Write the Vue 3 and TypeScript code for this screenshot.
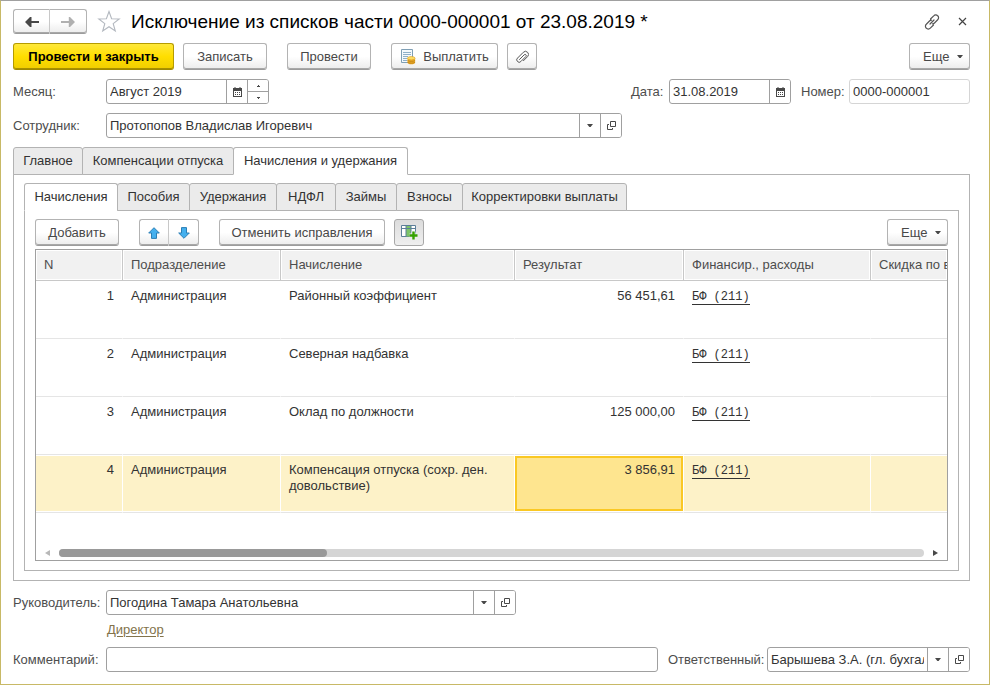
<script setup lang="ts">
import { ref } from 'vue'

interface Accrual {
  n: number
  department: string
  name: string
  result: string
  finance: string
}

const month = ref('Август 2019')
const date = ref('31.08.2019')
const docNumber = ref('0000-000001')
const employee = ref('Протопопов Владислав Игоревич')
const manager = ref('Погодина Тамара Анатольевна')
const comment = ref('')
const responsible = ref('Барышева З.А. (гл. бухгалтер)')

const sections = ['Главное', 'Компенсации отпуска', 'Начисления и удержания']
const activeSection = ref(2)

const subsections = ['Начисления', 'Пособия', 'Удержания', 'НДФЛ', 'Займы', 'Взносы', 'Корректировки выплаты']
const activeSubsection = ref(0)

const columns = ['N', 'Подразделение', 'Начисление', 'Результат', 'Финансир., расходы', 'Скидка по вычетам']

const rows: Accrual[] = [
  { n: 1, department: 'Администрация', name: 'Районный коэффициент', result: '56 451,61', finance: 'БФ (211)' },
  { n: 2, department: 'Администрация', name: 'Северная надбавка', result: '', finance: 'БФ (211)' },
  { n: 3, department: 'Администрация', name: 'Оклад по должности', result: '125 000,00', finance: 'БФ (211)' },
  { n: 4, department: 'Администрация', name: 'Компенсация отпуска (сохр. ден. довольствие)', result: '3 856,91', finance: 'БФ (211)' },
]
const selectedRow = ref(4)
const visibleShare = 31
</script>

<template>
  <main class="window">
    <header class="titlebar">
      <div class="pair">
        <button type="button" class="btn nav" aria-label="Назад">
          <svg width="14" height="10" viewBox="0 0 14 10"><path d="M0 5 5 0h1.500v3.900H14v2.200H6.500V10H5z" fill="#484848" /></svg>
        </button>
        <button type="button" class="btn nav" aria-label="Вперед">
          <svg width="14" height="10" viewBox="0 0 14 10"><path d="M14 5 9 0H7.800v4H0v2h7.800v4H9z" fill="#b0b0b0" /></svg>
        </button>
      </div>
      <button type="button" class="plain star" aria-label="В избранное">
        <svg width="24" height="23" viewBox="0 0 24 23"><path d="m12 1.500 2.600 7.200 7.600.200-6 4.700 2.100 7.400-6.300-4.300L5.700 21l2.100-7.400-6-4.700 7.600-.200z" fill="#fff" stroke="#b3b8bf" stroke-width="1.100" /></svg>
      </button>
      <h1>Исключение из списков части 0000-000001 от 23.08.2019 *</h1>
      <button type="button" class="plain link" aria-label="Получить ссылку">
        <svg width="16" height="16" viewBox="0 0 16 16" fill="none" stroke="#555" stroke-width="1.200" stroke-linecap="round">
          <path d="M6.500 5 9.700 1.800a2.700 2.700 0 0 1 4 0 2.700 2.700 0 0 1 0 4L10.500 9a2.700 2.700 0 0 1-2 .800M9.500 11l-3.200 3.200a2.700 2.700 0 0 1-4 0 2.700 2.700 0 0 1 0-4L5.500 7a2.700 2.700 0 0 1 2-.800M6 10l4-4" />
        </svg>
      </button>
      <button type="button" class="plain close" aria-label="Закрыть">
        <svg width="9" height="9" viewBox="0 0 9 9"><path d="m1 1 7 7M8 1 1 8" stroke="#444" stroke-width="1.200" /></svg>
      </button>
    </header>

    <div class="commands">
      <button type="button" class="btn primary">Провести и закрыть</button>
      <button type="button" class="btn regular">Записать</button>
      <button type="button" class="btn regular apart">Провести</button>
      <button type="button" class="btn apart pay">
        <svg width="16" height="16" viewBox="0 0 16 16">
          <path d="M1.500.500h11v13h-11z" fill="#f4f9fc" stroke="#7f9fb5" />
          <path d="M3 3.500h8M3 5.500h8M3 7.500h5M3 9.500h4M3 11.500h4" stroke="#8fb0c8" />
          <path d="M7.500 9v4.500c0 1 1.500 1.800 3.800 1.800s3.800-.800 3.800-1.800V9z" fill="#e9a92a" />
          <path d="M7.500 11.500c1.800 1.200 5.800 1.200 7.600 0M7.500 13.300c1.800 1.200 5.800 1.200 7.600 0" fill="none" stroke="#b97c10" stroke-width=".7" />
          <ellipse cx="11.300" cy="9.200" rx="3.800" ry="1.700" fill="#ffdc62" stroke="#d69a20" stroke-width=".6" />
        </svg>
        <span>Выплатить</span>
      </button>
      <button type="button" class="btn icon" aria-label="Файлы">
        <svg width="14" height="14" viewBox="0 0 14 14" fill="none" stroke="#555" stroke-linecap="round">
          <path d="M4.500 9.500 9.200 4.800a1.200 1.200 0 0 1 1.700 1.700l-5 5a2.300 2.300 0 0 1-3.400 0 2.300 2.300 0 0 1 0-3.400l5.800-5.800a3 3 0 0 1 4.300 0 3 3 0 0 1 0 4.300L8.500 10.700" />
        </svg>
      </button>
      <button type="button" class="btn more">Еще<i class="caret" /></button>
    </div>

    <div class="line">
      <label class="lead" for="month">Месяц:</label>
      <div class="field month">
        <input id="month" v-model="month" type="text" />
        <button type="button" class="part" aria-label="Календарь">
          <svg width="9" height="10" viewBox="0 0 9 10"><path d="M0 1h9v9H0z" fill="#484848" /><path d="M1 4h7v5H1z" fill="#fff" /><path d="M2 0v2M7 0v2" stroke="#484848" /><path d="M2 5.500h1m1 0h1m1 0h1M2 7.500h1m1 0h1m1 0h1" stroke="#484848" /></svg>
        </button>
        <div class="spin">
          <button type="button" aria-label="Больше"><svg width="3" height="2" viewBox="0 0 3 2"><path d="M1 0h1v1h1v1H0V1h1z" fill="#484848" /></svg></button>
          <button type="button" aria-label="Меньше"><svg width="3" height="2" viewBox="0 0 3 2"><path d="M0 0h3v1H2v1H1V1H0z" fill="#484848" /></svg></button>
        </div>
      </div>
      <label class="push date-label" for="date">Дата:</label>
      <div class="field date">
        <input id="date" v-model="date" type="text" />
        <button type="button" class="part" aria-label="Календарь">
          <svg width="9" height="10" viewBox="0 0 9 10"><path d="M0 1h9v9H0z" fill="#484848" /><path d="M1 4h7v5H1z" fill="#fff" /><path d="M2 0v2M7 0v2" stroke="#484848" /><path d="M2 5.500h1m1 0h1m1 0h1M2 7.500h1m1 0h1m1 0h1" stroke="#484848" /></svg>
        </button>
      </div>
      <label class="number-label" for="number">Номер:</label>
      <div class="field number"><input id="number" v-model="docNumber" type="text" /></div>
    </div>

    <div class="line">
      <label class="lead" for="employee">Сотрудник:</label>
      <div class="field employee">
        <input id="employee" v-model="employee" type="text" />
        <button type="button" class="part" aria-label="Выбрать"><i class="caret" /></button>
        <button type="button" class="part" aria-label="Открыть">
          <svg width="9" height="9" viewBox="0 0 9 9"><path d="M3.500.500h5v5h-5zM2 3.500H.500v5h5V7" fill="none" stroke="#484848" /></svg>
        </button>
      </div>
    </div>

    <section class="book">
      <nav class="tabs outer" role="tablist">
        <button v-for="(s, i) in sections" :key="s" type="button" role="tab" :aria-selected="i === activeSection" class="tab" :class="{ active: i === activeSection }" @click="activeSection = i">{{ s }}</button>
      </nav>
      <div class="page">
        <nav class="tabs inner" role="tablist">
          <button v-for="(s, i) in subsections" :key="s" type="button" role="tab" :aria-selected="i === activeSubsection" class="tab" :class="{ active: i === activeSubsection }" @click="activeSubsection = i">{{ s }}</button>
        </nav>
        <div class="page">
          <div class="commands">
            <button type="button" class="btn regular">Добавить</button>
            <div class="pair apart">
              <button type="button" class="btn icon" aria-label="Вверх">
                <svg width="12" height="12" viewBox="0 0 12 12"><path d="M6 .700 11.300 6H8.500v5.400h-5V6H.700z" fill="#45b0ee" stroke="#2c7fb5" /></svg>
              </button>
              <button type="button" class="btn icon" aria-label="Вниз">
                <svg width="12" height="12" viewBox="0 0 12 12"><path d="M6 11.300 .700 6h2.800V.600h5V6h2.800z" fill="#45b0ee" stroke="#2c7fb5" /></svg>
              </button>
            </div>
            <button type="button" class="btn apart wide">Отменить исправления</button>
            <button type="button" class="btn icon pressed" aria-label="Показать колонки">
              <svg width="17" height="15" viewBox="0 0 17 15">
                <path d="M.500.500h14v11H.500z" fill="#fff" stroke="#5c7f99" />
                <path d="M5 1h5v10.500H5z" fill="#7cc467" />
                <path d="M.500 3.500h14M5 .500v11M10 .500v11" stroke="#5c7f99" />
                <path d="M12.500 6.500v8M8.500 10.500h8" stroke="#eee" stroke-width="4" />
                <path d="M12.500 6.500v8M8.500 10.500h8" stroke="#35a000" stroke-width="2.400" />
              </svg>
            </button>
            <button type="button" class="btn more">Еще<i class="caret" /></button>
          </div>

          <div class="grid">
            <table>
              <colgroup>
                <col class="c-n" /><col class="c-dep" /><col class="c-name" /><col class="c-res" /><col class="c-fin" /><col />
              </colgroup>
              <thead>
                <tr><th v-for="c in columns" :key="c" scope="col">{{ c }}</th></tr>
              </thead>
              <tbody>
                <tr v-for="r in rows" :key="r.n" :class="{ selected: r.n === selectedRow }" @click="selectedRow = r.n">
                  <td class="num">{{ r.n }}</td>
                  <td>{{ r.department }}</td>
                  <td>{{ r.name }}</td>
                  <td class="num current">{{ r.result }}</td>
                  <td><a href="#" class="fin">{{ r.finance }}</a></td>
                  <td></td>
                </tr>
              </tbody>
            </table>
            <div class="scroll">
              <button type="button" class="plain" aria-label="Влево"><svg width="5" height="6" viewBox="0 0 5 6"><path d="M5 0v6L0 3z" fill="#b8b8b8" /></svg></button>
              <div class="track"><div class="thumb" :style="{ width: visibleShare + '%' }" /></div>
              <button type="button" class="plain" aria-label="Вправо"><svg width="5" height="6" viewBox="0 0 5 6"><path d="M0 0v6l5-3z" fill="#484848" /></svg></button>
            </div>
          </div>
        </div>
      </div>
    </section>

    <div class="line">
      <label class="lead" for="manager">Руководитель:</label>
      <div class="field manager">
        <input id="manager" v-model="manager" type="text" />
        <button type="button" class="part" aria-label="Выбрать"><i class="caret" /></button>
        <button type="button" class="part" aria-label="Открыть">
          <svg width="9" height="9" viewBox="0 0 9 9"><path d="M3.500.500h5v5h-5zM2 3.500H.500v5h5V7" fill="none" stroke="#484848" /></svg>
        </button>
      </div>
    </div>
    <div class="position"><a href="#">Директор</a></div>
    <div class="line">
      <label class="lead" for="comment">Комментарий:</label>
      <div class="field comment"><input id="comment" v-model="comment" type="text" /></div>
      <label class="resp-label" for="responsible">Ответственный:</label>
      <div class="field responsible">
        <input id="responsible" v-model="responsible" type="text" />
        <button type="button" class="part" aria-label="Выбрать"><i class="caret" /></button>
        <button type="button" class="part" aria-label="Открыть">
          <svg width="9" height="9" viewBox="0 0 9 9"><path d="M3.500.500h5v5h-5zM2 3.500H.500v5h5V7" fill="none" stroke="#484848" /></svg>
        </button>
      </div>
    </div>
  </main>
</template>

<style>
body {
  margin: 0;
  background: #fff;
}
</style>

<style scoped>
.window,
.window * {
  box-sizing: border-box;
}
.window {
  display: flex;
  flex-direction: column;
  gap: 9px;
  min-height: 100vh;
  padding: 8px 19px 12px 12px;
  border: 1px solid #c8b966;
  border-top-color: #a0a0a0;
  background: #fff;
  color: #333;
  font: 13px/16px Arial, "Liberation Sans", sans-serif;
}
button,
input {
  margin: 0;
  font: inherit;
  color: inherit;
}
svg {
  display: block;
  flex: none;
}
.plain {
  display: flex;
  align-items: center;
  justify-content: center;
  padding: 0;
  border: 0;
  background: none;
}
.titlebar {
  display: flex;
  align-items: center;
  height: 25px;
}
h1 {
  flex: 1;
  margin: 0;
  color: #000;
  font-size: 19px;
  font-weight: 400;
  line-height: 24px;
  white-space: nowrap;
}
.star {
  width: 24px;
  margin: 0 10px;
}
.link {
  width: 16px;
  margin-right: 15px;
}
.close {
  width: 15px;
}
.commands {
  display: flex;
  align-items: center;
  gap: 9px;
  height: 27px;
}
.btn {
  display: flex;
  flex: none;
  align-items: center;
  justify-content: center;
  height: 27px;
  padding: 0;
  border: 1px solid #b3b3b3;
  border-bottom-color: #9c9c9c;
  border-radius: 3px;
  background: linear-gradient(#fff 50%, #ececec);
  box-shadow: inset 0 -1px #a8a8a8;
  color: #484848;
  white-space: nowrap;
}
.regular {
  width: 84px;
}
.wide {
  width: 166px;
}
.apart {
  margin-left: 11px;
}
.primary {
  width: 161px;
  border-color: #b59b00;
  border-bottom-color: #a08a00;
  background: linear-gradient(#ffe83a, #ffde00 50%, #f0cd00);
  box-shadow: inset 0 -1px #a89000;
  color: #000;
  font-weight: 700;
}
.pay {
  gap: 7px;
  width: 107px;
}
.icon {
  width: 30px;
}
.pressed {
  border-color: #a8a8a8;
  background: linear-gradient(#dcdcdc, #efefef);
  box-shadow: none;
}
.more {
  justify-content: space-between;
  width: 61px;
  margin-left: auto;
  padding: 0 6px 0 13px;
}
.pair {
  display: flex;
}
.pair .btn:first-child {
  border-right-color: #c8c8c8;
  border-radius: 3px 0 0 3px;
}
.pair .btn:last-child {
  border-left: 0;
  border-radius: 0 3px 3px 0;
}
.nav {
  width: 37px;
  height: 25px;
}
.caret {
  width: 6px;
  height: 3px;
  background: #484848;
  clip-path: polygon(0 0, 100% 0, 60% 100%, 40% 100%);
}
.line {
  display: flex;
  align-items: center;
}
label {
  flex: none;
  color: #4d4d4d;
  white-space: nowrap;
}
.lead {
  width: 93px;
}
.push {
  margin-left: auto;
}
.date-label {
  width: 38px;
}
.number-label {
  width: 48px;
  margin-left: 10px;
}
.resp-label {
  width: 99px;
  margin-left: 10px;
}
.field {
  display: flex;
  height: 25px;
  overflow: hidden;
  border: 1px solid #a0a0a0;
  border-radius: 3px;
  background: #fff;
}
.field input {
  flex: 1;
  min-width: 0;
  padding: 0 3px;
  border: 0;
  outline: 0;
  background: none;
}
.month {
  width: 163px;
}
.date {
  width: 122px;
}
.number {
  width: 121px;
  border-color: #d5d5d5;
}
.employee {
  width: 516px;
}
.manager {
  width: 410px;
}
.comment {
  flex: 1;
}
.responsible {
  width: 203px;
}
.part {
  display: flex;
  flex: none;
  align-items: center;
  justify-content: center;
  width: 21px;
  padding: 0;
  border: 0;
  border-left: 1px solid #a0a0a0;
  background: #fff;
}
.spin {
  display: flex;
  flex-direction: column;
  width: 21px;
  border-left: 1px solid #a0a0a0;
}
.spin button {
  display: flex;
  flex: 1;
  align-items: center;
  justify-content: center;
  padding: 0;
  border: 0;
  background: #fff;
}
.spin button + button {
  border-top: 1px solid #a0a0a0;
}
.book {
  display: flex;
  flex: 1;
  flex-direction: column;
}
.tabs {
  display: grid;
  height: 28px;
  margin-bottom: -1px;
}
.outer {
  grid-template-columns: 69px 151px 174px;
}
.inner {
  grid-template-columns: 93px 72px 87px 59px 61px 66px 164px;
}
.tab {
  position: relative;
  height: 28px;
  margin-right: -1px;
  padding: 0;
  border: 1px solid #b3b3b3;
  border-radius: 3px 3px 0 0;
  background: #ebebeb;
  white-space: nowrap;
}
.tab.active {
  border-bottom-color: #fff;
  background: #fff;
}
.page {
  display: flex;
  flex: 1;
  flex-direction: column;
  padding: 8px 10px 9px;
  border: 1px solid #b3b3b3;
}
.page .page {
  gap: 3px;
}
.grid {
  display: flex;
  flex: 1;
  flex-direction: column;
  min-width: 0;
  overflow: hidden;
  border: 1px solid #a0a0a0;
}
table {
  width: 100%;
  table-layout: fixed;
  border-spacing: 0;
}
.c-n {
  width: 87px;
}
.c-dep {
  width: 158px;
}
.c-name {
  width: 234px;
}
.c-res {
  width: 169px;
}
.c-fin {
  width: 187px;
}
th {
  height: 31px;
  padding: 0 8px;
  overflow: hidden;
  border-right: 1px solid #c8c8c8;
  border-bottom: 1px solid #c8c8c8;
  background: #f1f1f1;
  box-shadow: inset 0 0 0 1px #fff;
  color: #4d4d4d;
  font-weight: 400;
  text-align: left;
  white-space: nowrap;
}
th:last-child,
td:last-child {
  padding-right: 0;
  border-right: 0;
}
td {
  height: 58px;
  padding: 6px 8px 0;
  border: solid #fff;
  border-width: 1px 1px 1px 0;
  border-bottom-color: #e5e5e5;
  vertical-align: top;
}
.num {
  text-align: right;
}
.selected td {
  background: #fdf2c8;
  box-shadow: inset 0 -1px #fff;
}
.selected .current {
  background: #fee58f;
  box-shadow: inset 0 -1px #fff, inset 0 -3px #fac823, inset 0 0 0 2px #fac823;
}
.fin {
  display: inline-block;
  border-bottom: 1px solid #333;
  color: #333;
  font: 12px/13px "Courier New", "Liberation Mono", monospace;
  text-decoration: none;
}
.scroll {
  display: flex;
  align-items: center;
  margin-top: auto;
  padding: 0 0 3px;
}
.scroll .plain {
  width: 23px;
  height: 8px;
}
.track {
  flex: 1;
  height: 8px;
  border-radius: 4px;
  background: #d5d5d5;
}
.thumb {
  height: 8px;
  border-radius: 4px;
  background: #999;
}
.position {
  margin: -2px 0 0 94px;
}
.position a {
  color: #82734b;
  text-underline-offset: 2px;
}
</style>
